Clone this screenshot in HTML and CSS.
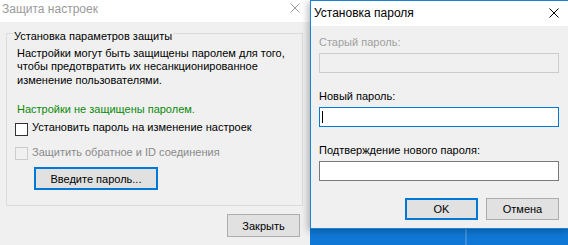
FILE: index.html
```html
<!DOCTYPE html>
<html lang="ru">
<head>
<meta charset="utf-8">
<title>Защита настроек</title>
<link rel="stylesheet" href="styles.css">
</head>
<body>
<div class="desktop">
  <section class="window window-back">
    <header class="titlebar">
      <span class="title">Защита настроек</span>
      <svg class="close" width="10" height="10" viewBox="0 0 10 10" aria-hidden="true"><path d="M0.5 0.5L9.5 9.5M9.5 0.5L0.5 9.5"/></svg>
    </header>
    <div class="body-back">
      <fieldset class="group">
        <legend>Установка параметров защиты</legend>
        <p class="desc">Настройки могут быть защищены паролем для того,<br>чтобы предотвратить их несанкционированное<br>изменение пользователями.</p>
        <p class="status">Настройки не защищены паролем.</p>
        <label class="check"><input type="checkbox"><span>Установить пароль на изменение настроек</span></label>
        <label class="check check-disabled"><input type="checkbox" disabled><span>Защитить обратное и ID соединения</span></label>
        <button class="btn btn-default btn-wide" type="button">Введите пароль...</button>
      </fieldset>
      <div class="footer">
        <button class="btn" type="button">Закрыть</button>
      </div>
    </div>
  </section>

  <section class="window window-front">
    <header class="titlebar">
      <span class="title">Установка пароля</span>
      <svg class="close" width="10" height="10" viewBox="0 0 10 10" aria-hidden="true"><path d="M0.5 0.5L9.5 9.5M9.5 0.5L0.5 9.5"/></svg>
    </header>
    <div class="body-front">
      <label class="lbl lbl-disabled">Старый пароль:</label>
      <div class="field-wrap"><input class="field" type="password" disabled></div>
      <label class="lbl lbl-gap">Новый пароль:</label>
      <div class="field-wrap"><input class="field field-focus" type="password"><span class="caret"></span></div>
      <label class="lbl lbl-gap">Подтверждение нового пароля:</label>
      <div class="field-wrap"><input class="field" type="password"></div>
      <div class="actions">
        <button class="btn btn-default" type="button">OK</button>
        <button class="btn" type="button">Отмена</button>
      </div>
    </div>
  </section>
</div>
</body>
</html>
```
FILE: styles.css
```css
* { box-sizing: border-box; }
html, body { margin: 0; padding: 0; }
body {
  font-family: "Liberation Sans", Arial, sans-serif;
  font-size: 11px;
  line-height: 15px;
  color: #000;
}
.desktop {
  position: relative;
  width: 568px;
  height: 245px;
  overflow: hidden;
  background-color: #0f78d6;
  background-image: linear-gradient(90deg, transparent 465px, #3a8fdc 465px, #3a8fdc 467px, transparent 467px);
}
.window {
  position: absolute;
  top: 0;
  background: #f0f0f0;
  display: flex;
  flex-direction: column;
}
.window-back { left: 0; width: 310px; height: 245px; }
.window-front {
  left: 310px;
  width: 260px;
  height: 229px;
  border: 1px solid #1883d7;
  box-shadow: -2px 2px 7px rgba(0, 0, 0, 0.28);
}
.titlebar {
  flex: none;
  display: flex;
  justify-content: space-between;
  align-items: flex-start;
  background: #fff;
}
.title { font-size: 12px; line-height: 15px; }
.close { display: block; fill: none; stroke-width: 1; }
.window-back .titlebar { height: 22px; padding: 2px 10px 0 2px; }
.window-back .title { color: #999; }
.window-back .close { stroke: #999; margin-top: 1px; }
.window-front .titlebar { height: 25px; padding: 4.5px 10px 0 3px; }
.window-front .close { stroke: #000; margin-top: 2.5px; }

.body-back { padding: 0 7px 0 6px; display: flex; flex-direction: column; }
.group {
  margin: 1.5px 0 0;
  padding: 3px 8px 15px 8px;
  border: 1px solid #dcdcdc;
  min-width: 0;
  display: flex;
  flex-direction: column;
  align-items: flex-start;
}
.group legend { padding: 5px 1px 0; margin-left: -2px; line-height: 15px; }
.desc { margin: 0; padding-left: 2px; line-height: 13.5px; }
.status { margin: 15px 0 0; padding-left: 2px; color: #0a8a0a; }
.check { display: flex; align-items: flex-start; gap: 4px; margin-top: 3px; }
.check + .check { margin-top: 9px; }
.check input {
  appearance: none;
  -webkit-appearance: none;
  flex: none;
  width: 13px;
  height: 13px;
  margin: 2.5px 0 0;
  border: 1px solid #333;
  background: #fff;
}
.check-disabled { color: #8a8a8a; }
.check-disabled input { border-color: #cccccc; background: #f0f0f0; }

.btn {
  font: inherit;
  line-height: 15px;
  color: #000;
  background: #e1e1e1;
  border: 1px solid #adadad;
  padding: 1px 0 0;
  margin: 0;
  width: 73px;
  height: 23px;
}
.btn-default { border: 2px solid #0078d7; }
.btn-wide { width: 124px; margin: 7px 0 0 19px; }
.footer { display: flex; justify-content: flex-end; margin: 8px 3px 0 0; }

.body-front { padding: 9px 0 0 8px; display: flex; flex-direction: column; align-items: flex-start; }
.lbl { display: block; }
.lbl-disabled { color: #a0a0a0; }
.lbl-gap { margin-top: 16px; }
.field-wrap { position: relative; width: 240px; height: 20px; margin-top: 3px; }
.field {
  display: block;
  width: 100%;
  height: 100%;
  margin: 0;
  padding: 0 2px;
  border: 1px solid #7a7a7a;
  background: #fff;
  font: inherit;
  outline: none;
}
.field:disabled { border-color: #cccccc; background: #f0f0f0; }
.field-focus { border-color: #0078d7; }
.caret { position: absolute; left: 3px; top: 4px; width: 1px; height: 12px; background: #000; }
.actions { display: flex; justify-content: flex-end; gap: 8px; width: 240px; margin-top: 17px; }
.actions .btn { height: 22px; }
```
